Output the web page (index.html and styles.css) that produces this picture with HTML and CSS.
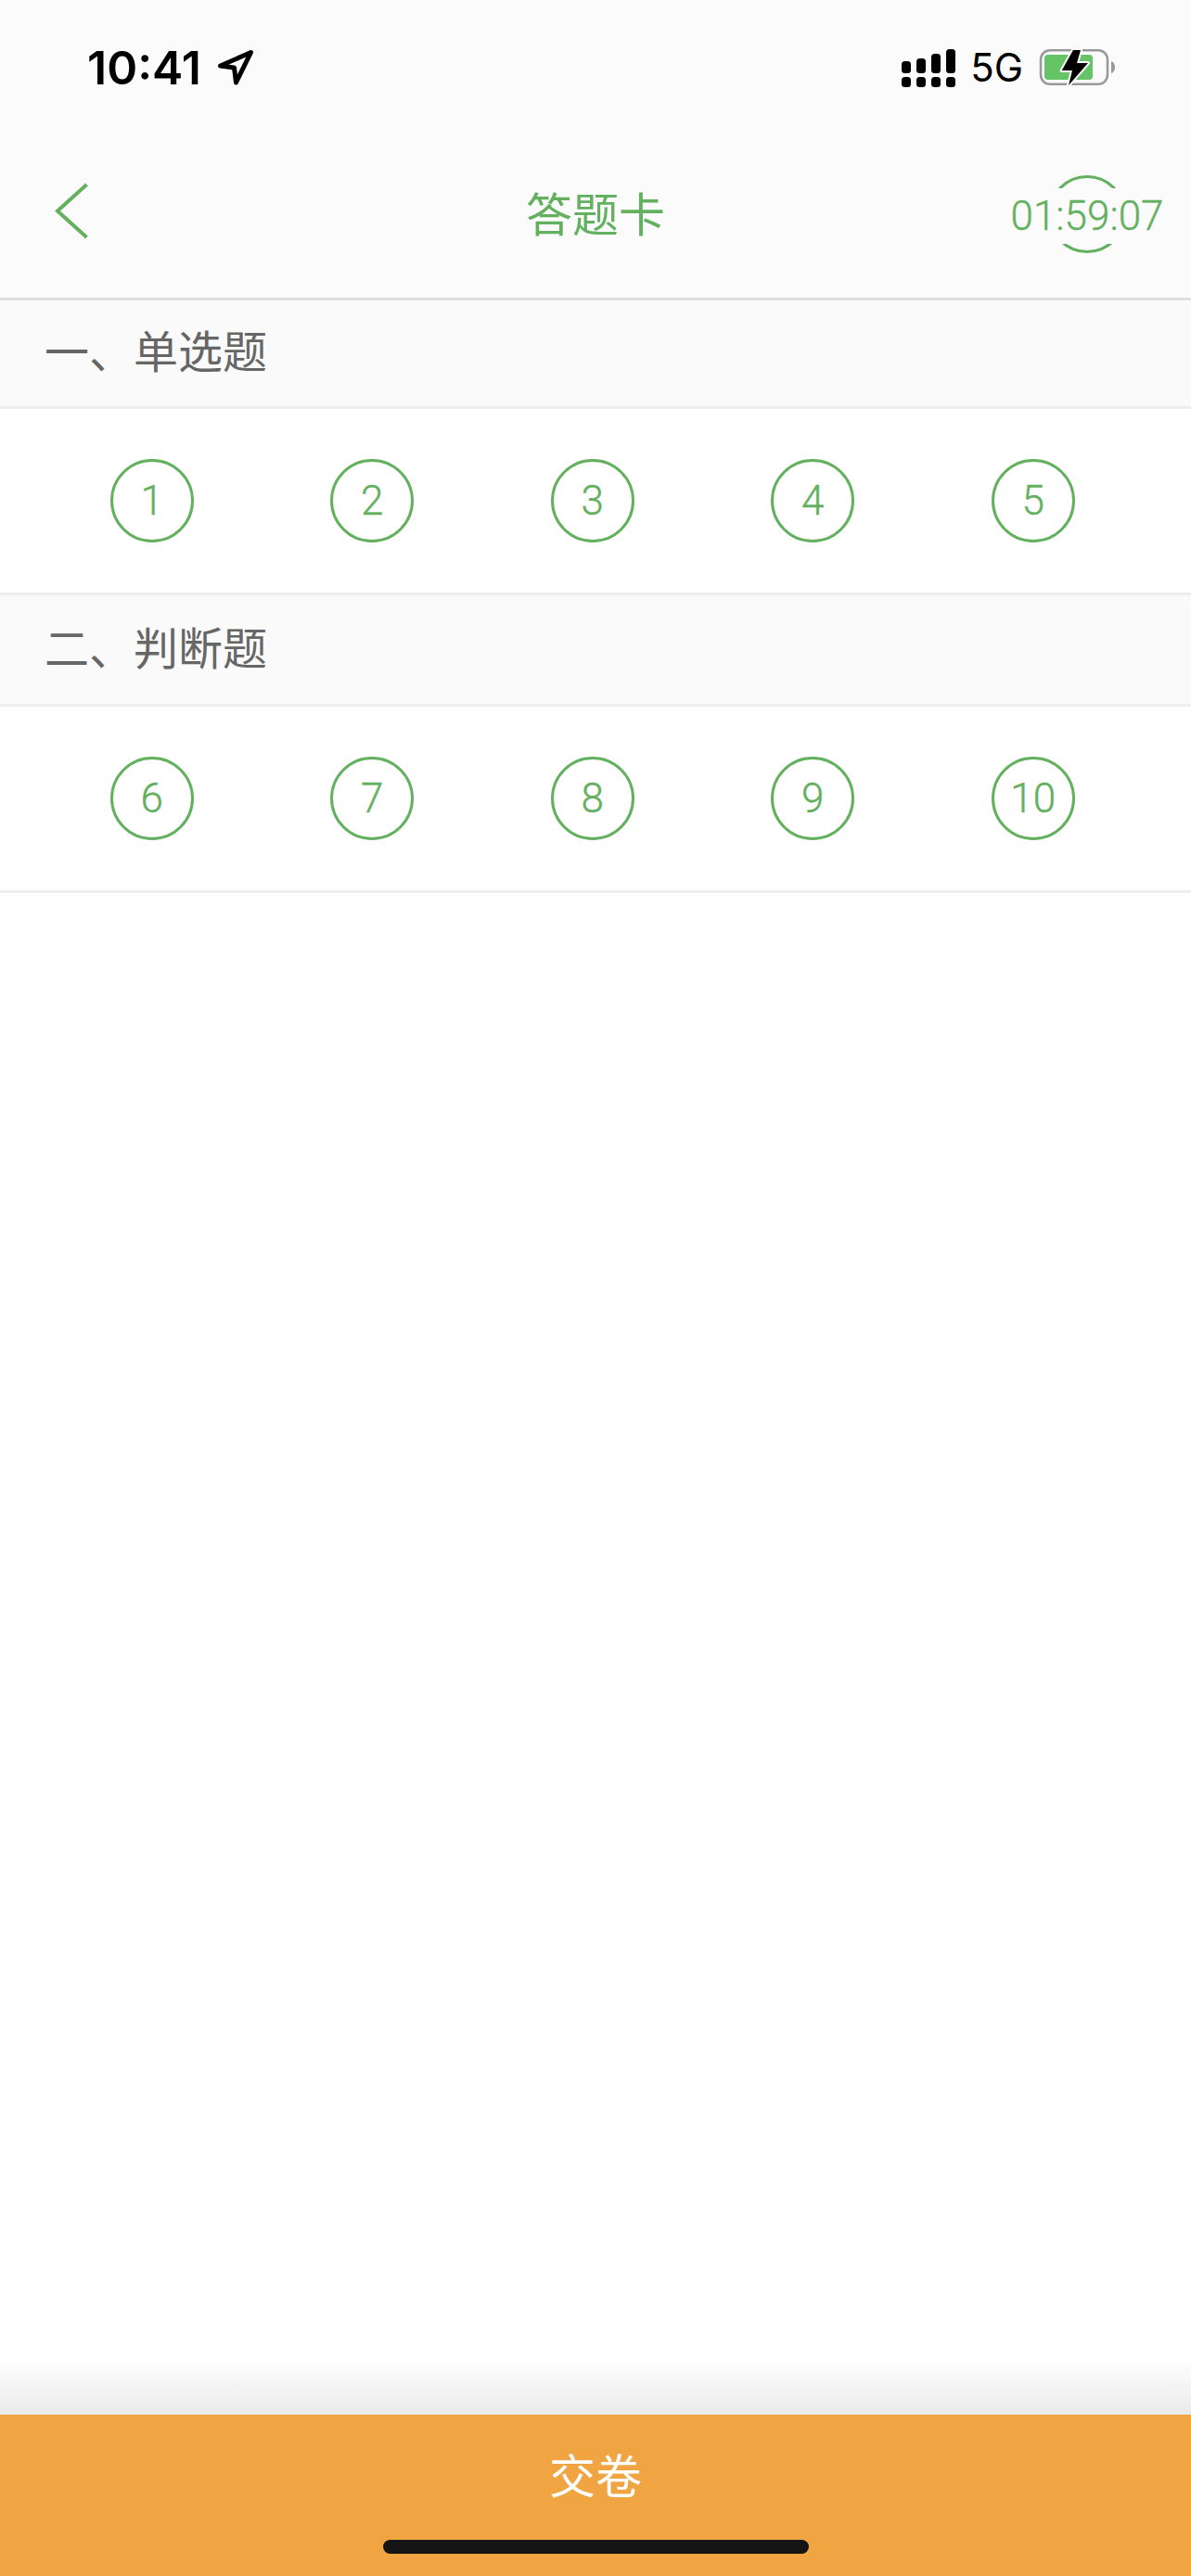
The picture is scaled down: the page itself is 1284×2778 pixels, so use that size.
FILE: index.html
```html
<!DOCTYPE html>
<html lang="zh">
<head>
<meta charset="utf-8">
<title>答题卡</title>
<link rel="stylesheet" href="styles.css">
</head>
<body>
<div class="app">
  <header class="top">
    <div class="status">
      <div class="status-left">
        <span class="clock">10:41</span>
        <svg class="loc" width="42" height="40" viewBox="0 0 42 40"><path d="M4.5 18 L37.5 3.5 L21.5 36 L19.5 20 Z" fill="none" stroke="#000" stroke-width="5" stroke-linejoin="round"/></svg>
      </div>
      <div class="status-right">
        <svg class="signal" width="58" height="41" viewBox="0 0 58 41" fill="#000">
          <rect x="0" y="13" width="10" height="13" rx="3.5"/><rect x="16" y="10" width="10" height="16" rx="3.5"/><rect x="32" y="5" width="10" height="21" rx="3.5"/><rect x="48" y="0" width="10" height="26" rx="3.5"/>
          <rect x="0" y="30" width="10" height="11" rx="3.5"/><rect x="16" y="30" width="10" height="11" rx="3.5"/><rect x="32" y="30" width="10" height="11" rx="3.5"/><rect x="48" y="30" width="10" height="11" rx="3.5"/>
        </svg>
        <span class="net">5G</span>
        <svg class="batt" width="82" height="42" viewBox="0 0 82 42">
          <rect x="2" y="2.2" width="72" height="36.6" rx="10" fill="none" stroke="#999" stroke-width="2.5"/>
          <rect x="6" y="7" width="52" height="27" rx="4" fill="#65c466"/>
          <path d="M78 14 C81 15 82 18 82 20.5 C82 23 81 26 78 27 Z" fill="#999"/>
          <path d="M37 2 L24.7 24 L36 24 L32 40 L53 16 L41 16 L45 2 Z" fill="#000" stroke="#fbfbfb" stroke-width="4" stroke-linejoin="round" paint-order="stroke"/>
        </svg>
      </div>
    </div>
    <div class="nav">
      <svg class="back" width="38" height="62" viewBox="0 0 38 62"><path d="M35.5 2 L4 30.5 L35.5 59" fill="none" stroke="#63b05f" stroke-width="4"/></svg>
      <h1 class="title">答题卡</h1>
      <div class="timer">
        <svg class="ring" width="84" height="84" viewBox="0 0 84 84"><circle cx="42" cy="42" r="40.5" fill="none" stroke="#63b05f" stroke-width="3"/></svg>
        <span class="time">01:59:07</span>
      </div>
    </div>
  </header>

  <section class="group">
    <h2 class="group-title first">一、单选题</h2>
    <div class="grid">
      <span class="num">1</span><span class="num">2</span><span class="num">3</span><span class="num">4</span><span class="num">5</span>
    </div>
  </section>
  <section class="group">
    <h2 class="group-title">二、判断题</h2>
    <div class="grid">
      <span class="num">6</span><span class="num">7</span><span class="num">8</span><span class="num">9</span><span class="num">10</span>
    </div>
  </section>

  <div class="spacer"></div>

  <footer class="submit">
    <span class="submit-label">交卷</span>
    <span class="home-bar"></span>
  </footer>
</div>
</body>
</html>
```
FILE: styles.css
```css
* { box-sizing: border-box; }
html, body { margin: 0; padding: 0; }
body {
  width: 1284px;
  height: 2778px;
  background: #fff;
  font-family: "Noto Sans CJK SC", "Noto Sans", sans-serif;
  overflow: hidden;
}
.app {
  height: 2778px;
  display: flex;
  flex-direction: column;
}
.top {
  height: 324px;
  background: #fbfbfb;
  border-bottom: 3px solid #dedede;
  flex: none;
}
.status {
  height: 144px;
  padding: 51px 0 0 94px;
  display: flex;
  justify-content: space-between;
  align-items: flex-start;
}
.status-left {
  display: flex;
  align-items: center;
  gap: 16px;
  height: 44px;
}
.clock {
  font-family: Inter, "Noto Sans", sans-serif;
  font-weight: 600;
  font-size: 50px;
  color: #000;
  line-height: 44px;
}
.status-right {
  display: flex;
  align-items: center;
  height: 44px;
  padding-right: 82px;
}
.signal { margin-right: 16px; }
.net {
  font-family: Inter, "Noto Sans", sans-serif;
  font-size: 42px;
  color: #000;
  line-height: 44px;
  margin-right: 17px;
}
.nav {
  height: 177px;
  display: flex;
  align-items: center;
  justify-content: center;
  position: relative;
}
.back {
  position: absolute;
  left: 58px;
  top: 53px;
}
.title {
  margin: 0;
  font-size: 50px;
  font-weight: 400;
  color: #63b05f;
  line-height: 60px;
  margin-top: -9px;
}
.timer {
  position: absolute;
  left: 1092px;
  top: 45px;
  width: 160px;
  height: 84px;
  display: flex;
  align-items: center;
  justify-content: center;
}
.ring {
  position: absolute;
  left: 38px;
  top: 0;
}
.time {
  position: relative;
  margin-top: 4px;
  background: #fbfbfb;
  font-family: Roboto, sans-serif;
  font-weight: 300;
  font-size: 44px;
  line-height: 60px;
  color: #63b05f;
  white-space: nowrap;
  -webkit-text-stroke: 0.4px #63b05f;
}
.group-title {
  margin: 0;
  height: 120px;
  padding: 0 0 10px 48px;
  display: flex;
  align-items: center;
  font-size: 48px;
  font-weight: 400;
  color: #666;
  background: #fafafa;
  border-bottom: 3px solid #eee;
}
.group-title.first { height: 117px; }
.grid {
  height: 201px;
  padding-left: 45px;
  display: grid;
  grid-template-columns: repeat(5, 237.5px);
  align-items: center;
  border-bottom: 3px solid #eee;
}
.num {
  justify-self: center;
  width: 90px;
  height: 90px;
  border: 3px solid #63b05f;
  border-radius: 50%;
  display: flex;
  align-items: center;
  justify-content: center;
  font-family: Roboto, sans-serif;
  font-weight: 300;
  font-size: 44px;
  color: #63b05f;
  -webkit-text-stroke: 0.4px #63b05f;
}
.spacer {
  flex: 1;
  background: linear-gradient(to bottom, #fff 0, #fff calc(100% - 62px), #eaeaea 100%);
}
.submit {
  height: 174px;
  flex: none;
  background: #f0a442;
  position: relative;
  display: flex;
  justify-content: center;
}
.submit-label {
  margin-top: 28px;
  font-size: 50px;
  line-height: 70px;
  color: #fff;
}
.home-bar {
  position: absolute;
  left: 413px;
  top: 135px;
  width: 459px;
  height: 15px;
  border-radius: 8px;
  background: #141414;
}
```
